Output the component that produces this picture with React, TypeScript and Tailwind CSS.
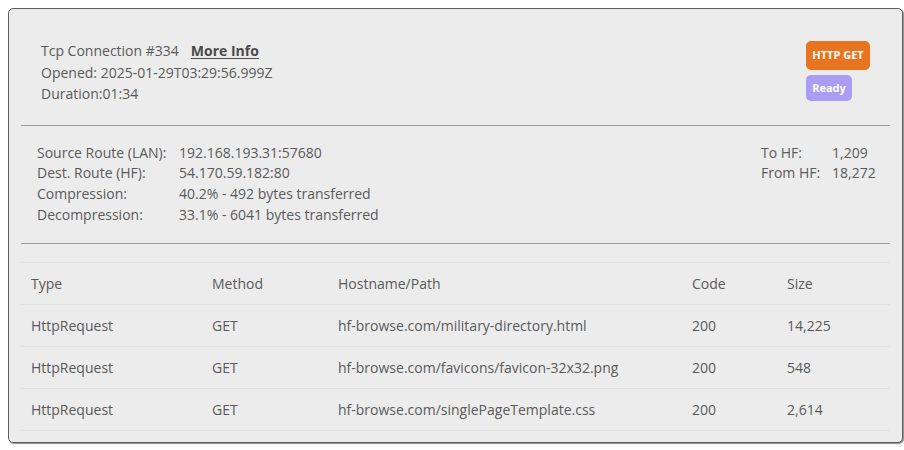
import React from "react";

const rows = [
  { type: "HttpRequest", method: "GET", path: "hf-browse.com/military-directory.html", code: "200", size: "14,225" },
  { type: "HttpRequest", method: "GET", path: "hf-browse.com/favicons/favicon-32x32.png", code: "200", size: "548" },
  { type: "HttpRequest", method: "GET", path: "hf-browse.com/singlePageTemplate.css", code: "200", size: "2,614" },
];

const gridCols = "grid grid-cols-[181px_126px_354px_95px_1fr]";

export default function App() {
  return (
    <div className="w-[904px] h-[450px] bg-white pt-[8px] pl-[8px] text-[#5a5a5a] text-[14px]" style={{ fontFamily: '"Open Sans", "Noto Sans", sans-serif' }}>
      <div className="w-[895px] h-[435px] bg-[#ececec] border border-[#5e5e5e] rounded-[5px] shadow-[1px_1px_1px_rgba(0,0,0,0.45)] px-[12px] pb-[12px]">
        {/* Header */}
        <div className="flex justify-between pt-[31px] pb-[20px] pl-[20px] pr-[20px] border-b border-[#9c9c9c]">
          <div className="leading-[21.5px]">
            <div>
              Tcp Connection #334
              <span className="ml-[12px] font-bold text-[#4a4a4a] underline underline-offset-2">More Info</span>
            </div>
            <div>Opened: 2025-01-29T03:29:56.999Z</div>
            <div>Duration:01:34</div>
          </div>
          <div className="flex flex-col items-start gap-[5px] mt-[1px] w-[64px]">
            <span className="h-[29px] w-[64px] flex items-center justify-center rounded-[5px] bg-[#e9741f] text-white font-bold text-[11px]">HTTP GET</span>
            <span className="h-[26px] w-[46px] flex items-center justify-center rounded-[5px] bg-[#a99df6] text-white font-bold text-[11px]">Ready</span>
          </div>
        </div>
        {/* Info */}
        <div className="flex justify-between pt-[17px] pb-[18px] pl-[16px] pr-[13px] border-b border-[#9c9c9c] leading-[20.7px]">
          <div className="grid grid-cols-[142px_1fr]">
            <div>Source Route (LAN):</div><div>192.168.193.31:57680</div>
            <div>Dest. Route (HF):</div><div>54.170.59.182:80</div>
            <div>Compression:</div><div>40.2% - 492 bytes transferred</div>
            <div>Decompression:</div><div>33.1% - 6041 bytes transferred</div>
          </div>
          <div className="grid grid-cols-[71px_1fr] h-fit w-[116px]">
            <div>To HF:</div><div>1,209</div>
            <div>From HF:</div><div>18,272</div>
          </div>
        </div>
        {/* Table */}
        <div className="mt-[18px] border-t border-[#e2e2e2]">
          <div className={`${gridCols} h-[42px] items-center border-b border-[#e2e2e2]`}>
            <div className="pl-[10px]">Type</div>
            <div className="pl-[10px]">Method</div>
            <div className="pl-[10px]">Hostname/Path</div>
            <div className="pl-[10px]">Code</div>
            <div className="pl-[10px]">Size</div>
          </div>
          {rows.map((r, i) => (
            <div key={i} className={`${gridCols} h-[42px] items-center border-b border-[#e2e2e2]`}>
              <div className="pl-[10px]">{r.type}</div>
              <div className="pl-[10px]">{r.method}</div>
              <div className="pl-[10px]">{r.path}</div>
              <div className="pl-[10px]">{r.code}</div>
              <div className="pl-[10px]">{r.size}</div>
            </div>
          ))}
        </div>
      </div>
    </div>
  );
}
